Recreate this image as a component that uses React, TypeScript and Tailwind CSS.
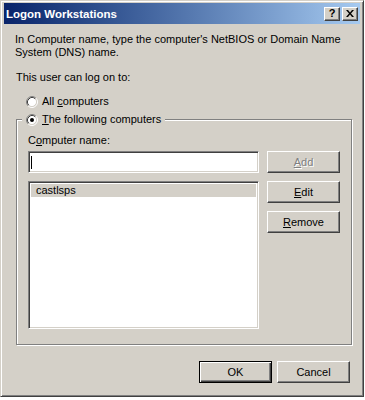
import type { ReactNode } from 'react';

const raised =
  'border border-t-white border-l-white border-r-[#404040] border-b-[#404040] shadow-[inset_-1px_-1px_0_#808080]';
const sunken =
  'border border-t-[#808080] border-l-[#808080] border-r-white border-b-white shadow-[inset_1px_1px_0_#404040,inset_-1px_-1px_0_#d4d0c8]';

function Radio({ checked }: { checked?: boolean }) {
  return (
    <svg width="12" height="12" viewBox="0 0 12 12" className="shrink-0">
      <circle cx="6" cy="6" r="4.5" fill="#fff" />
      <path d="M2.11 9.89 A5.5 5.5 0 0 1 9.89 2.11" fill="none" stroke="#808080" />
      <path d="M9.89 2.11 A5.5 5.5 0 0 1 2.11 9.89" fill="none" stroke="#fff" />
      <path d="M2.82 9.18 A4.5 4.5 0 0 1 9.18 2.82" fill="none" stroke="#404040" />
      <path d="M9.18 2.82 A4.5 4.5 0 0 1 2.82 9.18" fill="none" stroke="#d4d0c8" />
      {checked && <circle cx="6" cy="6" r="2" fill="#000" />}
    </svg>
  );
}

function Btn({ children, disabled, def, className = '' }: { children: ReactNode; disabled?: boolean; def?: boolean; className?: string }) {
  const frame = def
    ? 'border border-black shadow-[inset_1px_1px_0_#fff,inset_-1px_-1px_0_#404040,inset_-2px_-2px_0_#808080]'
    : raised;
  return (
    <div
      className={`flex h-[22px] w-[73px] items-center justify-center bg-[#d4d0c8] ${frame} ${
        disabled ? 'text-[#808080] [text-shadow:1px_1px_0_#fff]' : ''
      } ${className}`}
    >
      {children}
    </div>
  );
}

export default function App() {
  return (
    <div className="h-[400px] w-[365px] bg-white font-['Liberation_Sans',Arial,sans-serif] text-[11px] leading-[13px] text-black">
      <div className="flex h-[397px] w-[364px] flex-col border border-t-[#d4d0c8] border-l-[#d4d0c8] border-r-[#404040] border-b-[#404040] bg-[#d4d0c8] px-[3px] pt-[2px] shadow-[inset_1px_1px_0_#fff,inset_-1px_-1px_0_#808080]">
        {/* title bar */}
        <div className="flex h-[21px] items-center bg-linear-to-r from-[#0a246a] to-[#a6caf0] pl-[2px] pr-[2px]">
          <span className="pt-px text-[11.5px] font-bold text-white">Logon Workstations</span>
          <div className="ml-auto flex gap-[2px]">
            <div className={`flex h-[14px] w-[16px] items-center justify-center bg-[#d4d0c8] text-[11px] font-bold leading-none ${raised}`}>
              ?
            </div>
            <div className={`flex h-[14px] w-[16px] items-center justify-center bg-[#d4d0c8] ${raised}`}>
              <svg width="8" height="7" viewBox="0 0 8 7">
                <path d="M0 0h2l2 2.5L6 0h2L5 3.5 8 7H6L4 4.5 2 7H0l3-3.5z" fill="#000" />
              </svg>
            </div>
          </div>
        </div>

        {/* body */}
        <div className="flex flex-1 flex-col px-[12px]">
          <p className="-ml-px pt-[9px]">
            In Computer name, type the computer's NetBIOS or Domain Name
            <br />
            System (DNS) name.
          </p>
          <p className="mt-[12px]">This user can log on to:</p>

          <div className="mt-[11px] flex h-[13px] items-center gap-[4px] pl-[10px]">
            <Radio />
            <span>
              All <u>c</u>omputers
            </span>
          </div>

          <div className="relative mt-[11px] w-[336px] border border-[#808080] px-[11px] pt-[14px] pb-[15px] shadow-[inset_1px_1px_0_#fff,1px_1px_0_#fff]">
            <div className="absolute -top-[7px] left-[5px] flex h-[13px] items-center gap-[4px] bg-[#d4d0c8] pr-[4px] pl-[4px]">
              <Radio checked />
              <span>
                <u>T</u>he following computers
              </span>
            </div>

            <p>
              C<u>o</u>mputer name:
            </p>
            <div className="mt-[4px] flex gap-[8px]">
              <div className={`flex h-[22px] w-[231px] items-center bg-white pl-[2px] ${sunken}`}>
                <span className="h-[13px] w-px bg-black" />
              </div>
              <Btn disabled>
                <span>
                  <u>A</u>dd
                </span>
              </Btn>
            </div>
            <div className="mt-[8px] flex gap-[8px]">
              <div className={`h-[148px] w-[231px] bg-white p-[2px] ${sunken}`}>
                <div className="h-[13px] bg-[#d4d0c8] pl-[5px]">castlsps</div>
              </div>
              <div className="flex flex-col gap-[8px]">
                <Btn>
                  <span>
                    <u>E</u>dit
                  </span>
                </Btn>
                <Btn>
                  <span>
                    <u>R</u>emove
                  </span>
                </Btn>
              </div>
            </div>
          </div>

          <div className="-mr-[2px] mt-[16px] flex justify-end gap-[5px]">
            <Btn def>OK</Btn>
            <Btn>Cancel</Btn>
          </div>
        </div>
      </div>
    </div>
  );
}
